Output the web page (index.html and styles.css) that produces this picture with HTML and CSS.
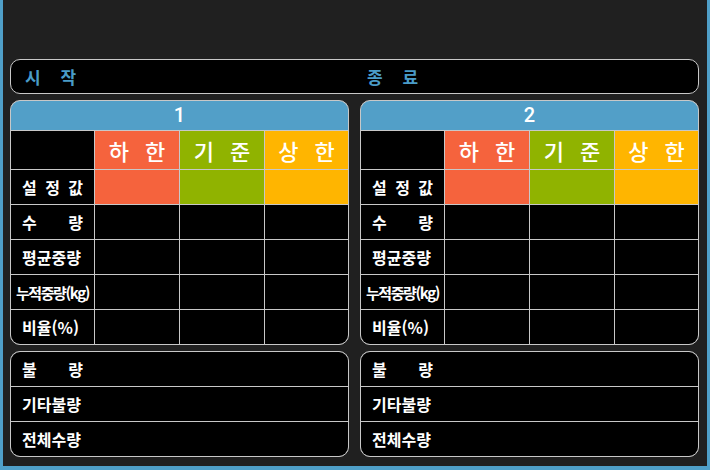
FILE: index.html
```html
<!DOCTYPE html>
<html lang="ko">
<head>
  <meta charset="UTF-8">
  <meta name="viewport" content="width=device-width, initial-scale=1.0">
  <title>Monitor</title>
  <link rel="stylesheet" href="styles.css">
</head>
<body>
  <div class="wrap">
    <div class="timebar">
      <div class="time"><span class="time-label">시 작</span></div>
      <div class="time"><span class="time-label">종 료</span></div>
    </div>

    <div class="columns">
      <div class="col">
        <div class="panel">
          <div class="panel-head">1</div>
          <div class="table">
            <div class="cell"></div>
            <div class="cell head low">하 한</div>
            <div class="cell head base">기 준</div>
            <div class="cell head high">상 한</div>

            <div class="cell label"><span class="jt">설 정 값</span></div>
            <div class="cell low"></div>
            <div class="cell base"></div>
            <div class="cell high"></div>

            <div class="cell label"><span class="jt">수 량</span></div>
            <div class="cell"></div><div class="cell"></div><div class="cell"></div>

            <div class="cell label"><span class="jt">평균중량</span></div>
            <div class="cell"></div><div class="cell"></div><div class="cell"></div>

            <div class="cell label"><span class="narrow">누적중량(kg)</span></div>
            <div class="cell"></div><div class="cell"></div><div class="cell"></div>

            <div class="cell label"><span class="jt">비율(%)</span></div>
            <div class="cell"></div><div class="cell"></div><div class="cell"></div>
          </div>
        </div>
        <div class="panel list">
          <div class="row"><span class="jt">불 량</span></div>
          <div class="row"><span class="jt">기타불량</span></div>
          <div class="row"><span class="jt">전체수량</span></div>
        </div>
      </div>

      <div class="col">
        <div class="panel">
          <div class="panel-head">2</div>
          <div class="table">
            <div class="cell"></div>
            <div class="cell head low">하 한</div>
            <div class="cell head base">기 준</div>
            <div class="cell head high">상 한</div>

            <div class="cell label"><span class="jt">설 정 값</span></div>
            <div class="cell low"></div>
            <div class="cell base"></div>
            <div class="cell high"></div>

            <div class="cell label"><span class="jt">수 량</span></div>
            <div class="cell"></div><div class="cell"></div><div class="cell"></div>

            <div class="cell label"><span class="jt">평균중량</span></div>
            <div class="cell"></div><div class="cell"></div><div class="cell"></div>

            <div class="cell label"><span class="narrow">누적중량(kg)</span></div>
            <div class="cell"></div><div class="cell"></div><div class="cell"></div>

            <div class="cell label"><span class="jt">비율(%)</span></div>
            <div class="cell"></div><div class="cell"></div><div class="cell"></div>
          </div>
        </div>
        <div class="panel list">
          <div class="row"><span class="jt">불 량</span></div>
          <div class="row"><span class="jt">기타불량</span></div>
          <div class="row"><span class="jt">전체수량</span></div>
        </div>
      </div>
    </div>
  </div>
</body>
</html>
```

FILE: styles.css
```css
* {
  box-sizing: border-box;
}

html,
body {
  height: 100%;
}

body {
  margin: 0;
  background: #202020;
  border-left: 3px solid #4f9fc8;
  border-right: 3px solid #4f9fc8;
  border-bottom: 4px solid #4f9fc8;
  font-family: "Noto Sans CJK KR", "Noto Sans", sans-serif;
  color: #fff;
}

.wrap {
  padding: 59px 8px 0 7px;
}

.timebar {
  display: flex;
  height: 35px;
  background: #000;
  border: 1px solid #c8c8c8;
  border-radius: 10px;
}

.time {
  flex: 1;
  display: flex;
  align-items: center;
}

.time:first-child {
  padding-left: 14px;
}

.time:last-child {
  padding-left: 11px;
}

.time-label {
  color: #4a9cc8;
  font-size: 17px;
  font-weight: 700;
  letter-spacing: 7.5px;
  line-height: 1;
}

.columns {
  display: flex;
  gap: 11px;
  margin-top: 6px;
}

.col {
  flex: 1;
  display: flex;
  flex-direction: column;
  gap: 6px;
}

.panel {
  border: 1px solid #c8c8c8;
  border-radius: 10px;
  overflow: hidden;
  background: #c8c8c8;
}

.panel-head {
  height: 30px;
  padding-bottom: 1px;
  background: #529fc8;
  border-bottom: 1px solid #c8c8c8;
  display: flex;
  align-items: center;
  justify-content: center;
  font-family: Roboto, "Noto Sans", sans-serif;
  font-size: 20px;
  font-weight: 500;
}

.table {
  display: grid;
  grid-template-columns: 83px 84px 84px 1fr;
  grid-template-rows: 38px repeat(5, 34px);
  gap: 1px;
}

.cell {
  background: #000;
  display: flex;
  align-items: center;
  justify-content: center;
}

.head {
  font-size: 22px;
  font-weight: 500;
  letter-spacing: 5px;
  padding-left: 5px;
}

.low {
  background: #f5633d;
}

.base {
  background: #90b300;
}

.high {
  background: #ffb500;
}

.jt {
  display: inline-block;
  width: 61px;
  font-size: 16px;
  font-weight: 700;
  line-height: 1;
  text-align: justify;
  text-align-last: justify;
  white-space: nowrap;
}

.narrow {
  font-size: 15px;
  font-weight: 700;
  letter-spacing: -1.4px;
  line-height: 1;
  white-space: nowrap;
}

.list {
  display: flex;
  flex-direction: column;
  gap: 1px;
}

.row {
  height: 34px;
  background: #000;
  display: flex;
  align-items: center;
  padding-left: 11px;
}
```
